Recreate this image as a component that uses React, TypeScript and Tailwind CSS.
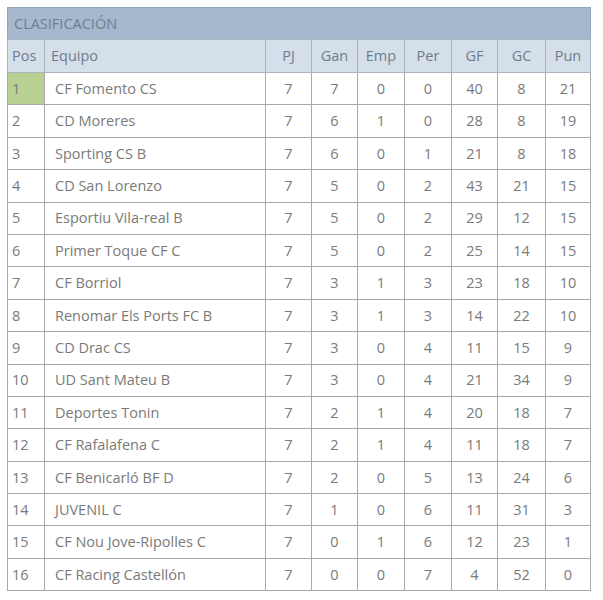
const rows: [number, string, number, number, number, number, number, number, number][] = [
  [1, "CF Fomento CS", 7, 7, 0, 0, 40, 8, 21],
  [2, "CD Moreres", 7, 6, 1, 0, 28, 8, 19],
  [3, "Sporting CS B", 7, 6, 0, 1, 21, 8, 18],
  [4, "CD San Lorenzo", 7, 5, 0, 2, 43, 21, 15],
  [5, "Esportiu Vila-real B", 7, 5, 0, 2, 29, 12, 15],
  [6, "Primer Toque CF C", 7, 5, 0, 2, 25, 14, 15],
  [7, "CF Borriol", 7, 3, 1, 3, 23, 18, 10],
  [8, "Renomar Els Ports FC B", 7, 3, 1, 3, 14, 22, 10],
  [9, "CD Drac CS", 7, 3, 0, 4, 11, 15, 9],
  [10, "UD Sant Mateu B", 7, 3, 0, 4, 21, 34, 9],
  [11, "Deportes Tonin", 7, 2, 1, 4, 20, 18, 7],
  [12, "CF Rafalafena C", 7, 2, 1, 4, 11, 18, 7],
  [13, "CF Benicarló BF D", 7, 2, 0, 5, 13, 24, 6],
  [14, "JUVENIL C", 7, 1, 0, 6, 11, 31, 3],
  [15, "CF Nou Jove-Ripolles C", 7, 0, 1, 6, 12, 23, 1],
  [16, "CF Racing Castellón", 7, 0, 0, 7, 4, 52, 0],
];

const stats = ["PJ", "Gan", "Emp", "Per", "GF", "GC", "Pun"];
const widths = ["w-[46px]", "w-[46px]", "w-[47px]", "w-[47px]", "w-[46px]", "w-[48px]", "w-[45px]"];

export default function App() {
  return (
    <div className="min-h-[600px] bg-white pt-[7px] pl-[7px] font-['Open_Sans',sans-serif] text-[14.5px] text-[#7a7a7a]">
      <div className="w-[584px]">
        {/* cabecera */}
        <div className="h-[32px] border border-b-0 border-[#95a6ba] bg-[#a5b8cd] pl-[6px] pt-[5px] text-[14.5px] text-[#6e7d8f]">
          CLASIFICACIÓN
        </div>
        <table className="w-[584px] table-fixed border-collapse">
          <thead>
            <tr className="h-[33px] bg-[#d5dfea] text-[#6f7c8a]">
              <th className="w-[37px] border border-[#aab4bf] pl-[4px] text-left font-normal">Pos</th>
              <th className="w-[221px] border border-[#aab4bf] pl-[6px] text-left font-normal">Equipo</th>
              {stats.map((s, i) => (
                <th key={s} className={`${widths[i]} border border-[#aab4bf] text-center font-normal`}>
                  {s}
                </th>
              ))}
            </tr>
          </thead>
          <tbody>
            {rows.map((r) => (
              <tr key={r[0]} className="h-[32.4px]">
                <td className={`border border-[#a9a9a9] pl-[4px] ${r[0] === 1 ? "bg-[#b8d192]" : ""}`}>{r[0]}</td>
                <td className="border border-[#a9a9a9] pl-[10px]">{r[1]}</td>
                {r.slice(2).map((v, i) => (
                  <td key={i} className="border border-[#a9a9a9] text-center">
                    {v}
                  </td>
                ))}
              </tr>
            ))}
          </tbody>
        </table>
      </div>
    </div>
  );
}
